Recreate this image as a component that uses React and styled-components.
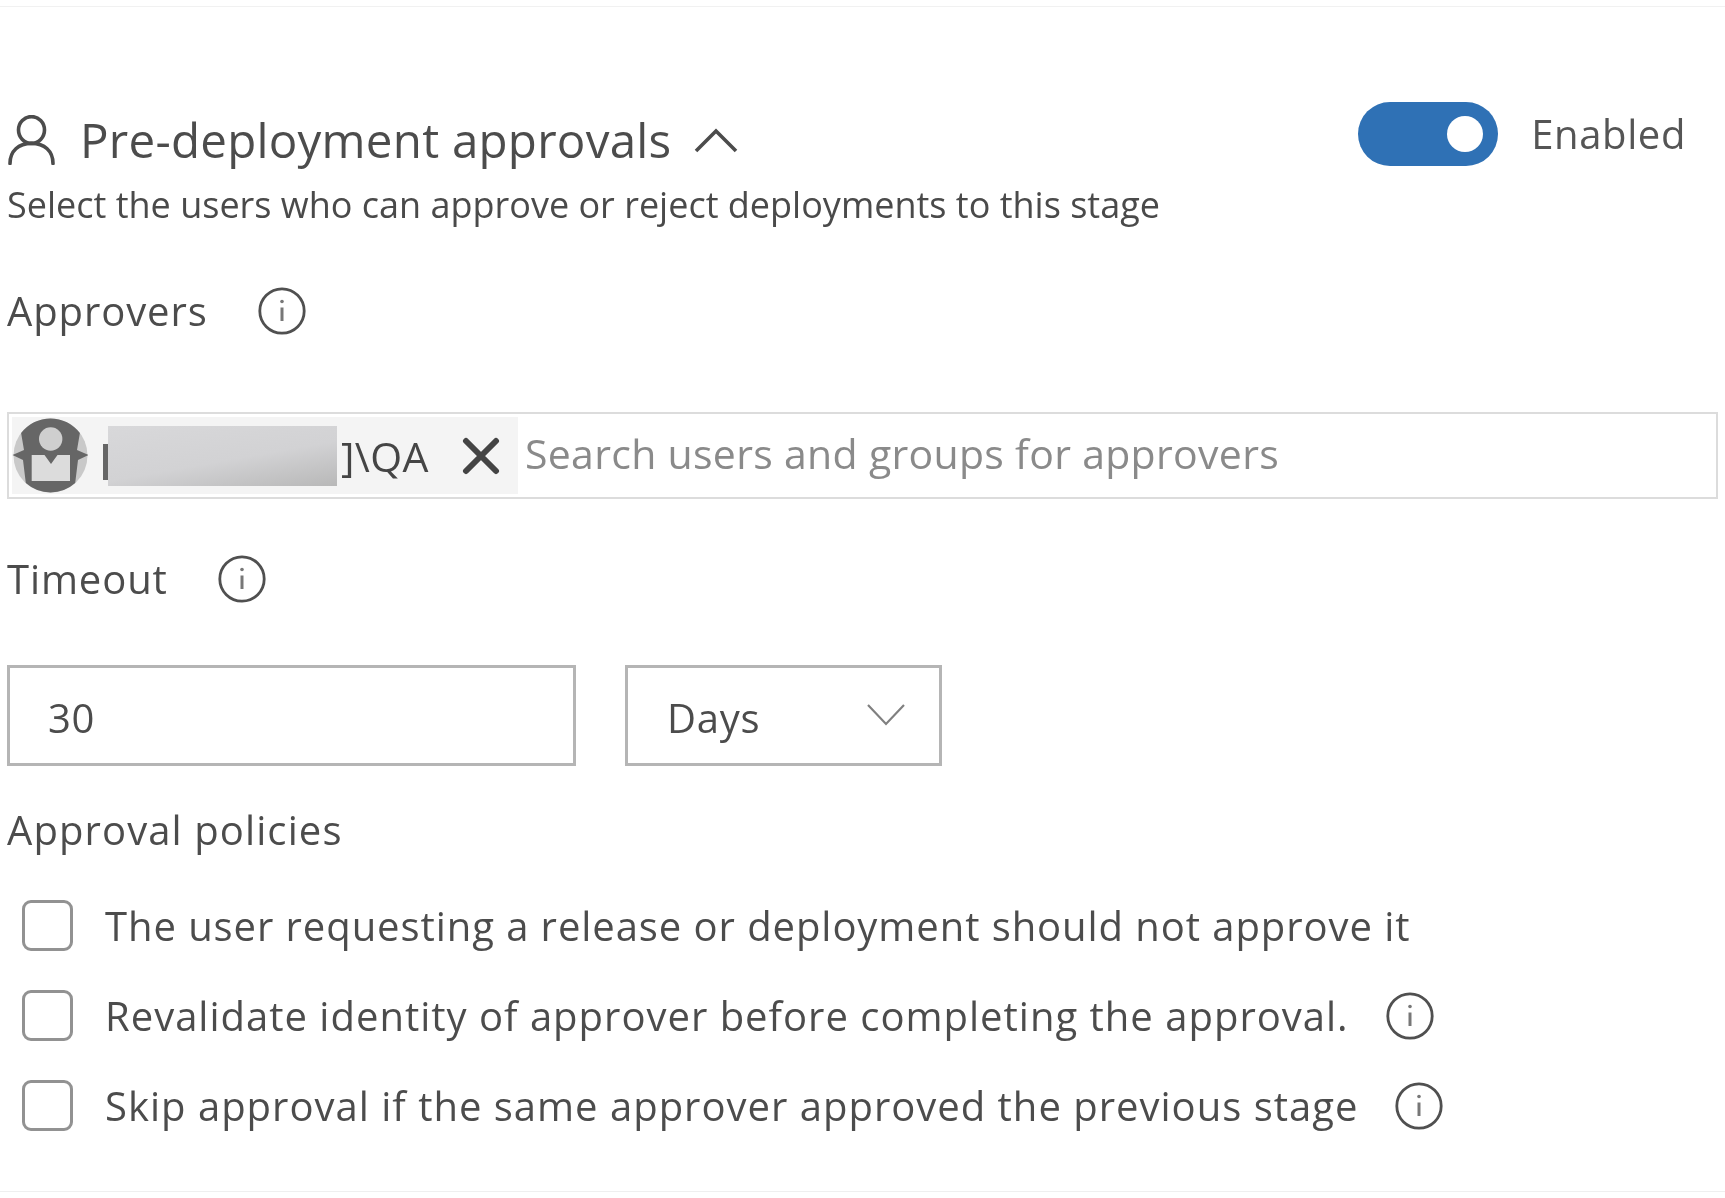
import React from "react";
import styled, { createGlobalStyle } from "styled-components";

const Global = createGlobalStyle`
  html, body { margin: 0; padding: 0; background: #fff; }
  body { font-family: "Open Sans", "Noto Sans", "Liberation Sans", sans-serif; color: #4f4f4f; }
`;

const Panel = styled.main`
  box-sizing: border-box;
  width: 1725px;
  height: 1186px;
  margin-top: 6px;
  padding: 95px 7px 0;
  border-top: 1px solid #f1f1f1;
  border-bottom: 1px solid #efefef;
  filter: blur(0.45px);
`;

const Header = styled.header`
  display: flex;
  justify-content: space-between;
  align-items: flex-start;
  height: 81px;
  padding-right: 32px;
`;

const TitleGroup = styled.div`
  display: flex;
  align-items: center;
  height: 76px;
  padding-left: 1px;
`;

const Title = styled.h1`
  margin: 0 0 0 25px;
  font-size: 47.5px;
  line-height: 76px;
  font-weight: 400;
  letter-spacing: 0.25px;
  color: #4c4c4c;
  white-space: nowrap;
`;

const ToggleGroup = styled.div`
  display: flex;
  align-items: center;
  gap: 33px;
`;

const ToggleTrack = styled.div`
  box-sizing: border-box;
  display: flex;
  align-items: center;
  justify-content: flex-end;
  width: 140px;
  height: 64px;
  padding-right: 15px;
  border-radius: 32px;
  background: #2f71b5;
`;

const ToggleKnob = styled.span`
  width: 36px;
  height: 36px;
  border-radius: 50%;
  background: #fff;
`;

const ToggleLabel = styled.span`
  padding-bottom: 2px;
  font-size: 40px;
  letter-spacing: 0.6px;
  color: #555;
`;

const Subtitle = styled.p`
  margin: 0;
  font-size: 36px;
  line-height: 44px;
  color: #4a4a4a;
  white-space: nowrap;
`;

const LabelRow = styled.div`
  display: flex;
  align-items: center;
  gap: ${(p) => p.$gap}px;
  height: 48px;
  margin-top: ${(p) => p.$top}px;
`;

const Label = styled.span`
  font-size: 40px;
  line-height: 48px;
  letter-spacing: ${(p) => p.$track}px;
  color: #4c4c4c;
  white-space: nowrap;
`;

const Picker = styled.div`
  box-sizing: border-box;
  display: flex;
  align-items: center;
  height: 87px;
  margin-top: 77px;
  padding: 3px;
  border: 2px solid #dcdcdc;
`;

const Chip = styled.div`
  display: flex;
  align-items: center;
  width: 506px;
  height: 100%;
  background: #f4f4f4;
`;

const RedactStart = styled.span`
  width: 5px;
  height: 36px;
  margin: 12px 0 0 15px;
  background: #666;
`;

const Redacted = styled.span`
  width: 229px;
  height: 60px;
  background: linear-gradient(170deg, #d8d8da 0%, #d2d2d4 55%, #b8b8b8 100%);
`;

const ChipName = styled.span`
  width: 121px;
  margin-left: 4px;
  font-size: 41px;
  letter-spacing: 0.4px;
  color: #454545;
  white-space: nowrap;
`;

const SearchText = styled.span`
  margin-left: 7px;
  padding-bottom: 5px;
  font-size: 41px;
  letter-spacing: 0.3px;
  color: #8a8a8a;
  white-space: nowrap;
`;

const FieldRow = styled.div`
  display: flex;
  gap: 49px;
  margin-top: 62px;
`;

const Field = styled.div`
  box-sizing: border-box;
  display: flex;
  align-items: center;
  justify-content: space-between;
  width: ${(p) => p.$width}px;
  height: 101px;
  padding: 4px ${(p) => p.$right}px 0 ${(p) => p.$left}px;
  border: 3px solid #b5b5b5;
  font-size: 40px;
  letter-spacing: 0.7px;
  color: #4c4c4c;
`;

const Policies = styled.div`
  display: flex;
  flex-direction: column;
  gap: 39px;
  margin-top: 46px;
  padding-left: 15px;
`;

const PolicyRow = styled.label`
  display: flex;
  align-items: center;
  height: 51px;
`;

const CheckBox = styled.span`
  box-sizing: border-box;
  flex: none;
  width: 51px;
  height: 51px;
  border: 3px solid #929292;
  border-radius: 9px;
`;

const PolicyText = styled.span`
  margin: 0 ${(p) => p.$gap}px 0 32px;
  font-size: 40px;
  letter-spacing: ${(p) => p.$track}px;
  color: #4c4c4c;
  white-space: nowrap;
`;

const Info = () => (
  <svg width="48" height="48" viewBox="0 0 48 48" fill="none" stroke="#505050" aria-hidden="true">
    <circle cx="24" cy="24" r="22.2" strokeWidth="2.8" />
    <path d="M24 20.5V34" strokeWidth="3" stroke="#777" />
    <circle cx="24" cy="14.5" r="1.8" fill="#777" stroke="none" />
  </svg>
);

const PersonIcon = () => (
  <svg width="47" height="50" viewBox="0 0 47 50" fill="none" stroke="#4c4c4c" strokeWidth="3.6" aria-hidden="true">
    <ellipse cx="23.5" cy="15" rx="13" ry="13.4" />
    <path d="M2 48.5C2 36 10.5 28.4 23.5 28.4S45 36 45 48.5" strokeLinecap="round" />
  </svg>
);

const ChevronUp = () => (
  <svg width="44" height="26" viewBox="0 0 44 26" fill="none" stroke="#4c4c4c" strokeWidth="3.6" style={{ marginLeft: 23 }} aria-hidden="true">
    <path d="M2 24L22 4L42 24" />
  </svg>
);

const DownMark = styled.svg`
  margin-bottom: 6px;
`;

const ChevronDown = () => (
  <DownMark width="40" height="24" viewBox="0 0 40 24" fill="none" stroke="#808080" strokeWidth="2.2" aria-hidden="true">
    <path d="M2 2L20 21L38 2" />
  </DownMark>
);

const CloseIcon = () => (
  <svg width="38" height="38" viewBox="0 0 38 38" fill="none" stroke="#444" strokeWidth="6" strokeLinecap="round" aria-hidden="true">
    <path d="M4 4L34 34M34 4L4 34" />
  </svg>
);

const Avatar = () => (
  <svg width="76" height="77" viewBox="0 0 76 77" aria-hidden="true">
    <circle cx="38.5" cy="38.5" r="37" fill="#c9c9c9" />
    <path d="M9.1 16A37 37 0 0 1 67.9 16L65 33L76.5 38L66 43L63.2 66A37 37 0 0 1 13.8 66L11 43L0.5 38L12 33Z" fill="#666" />
    <circle cx="38.7" cy="22" r="11.7" fill="#cfcfcf" />
    <path d="M19.7 38H32.5L39 47L45.5 38H58V64H19.7Z" fill="#dcdcdc" />
  </svg>
);

export default function App() {
  return (
    <>
      <Global />
      <Panel>
        <Header>
          <TitleGroup>
            <PersonIcon />
            <Title>Pre-deployment approvals</Title>
            <ChevronUp />
          </TitleGroup>
          <ToggleGroup>
            <ToggleTrack><ToggleKnob /></ToggleTrack>
            <ToggleLabel>Enabled</ToggleLabel>
          </ToggleGroup>
        </Header>
        <Subtitle>Select the users who can approve or reject deployments to this stage</Subtitle>
        <LabelRow $gap={50} $top={60}>
          <Label $track={0.9}>Approvers</Label>
          <Info />
        </LabelRow>
        <Picker>
          <Chip>
            <Avatar />
            <RedactStart />
            <Redacted />
            <ChipName>]\QA</ChipName>
            <CloseIcon />
          </Chip>
          <SearchText>Search users and groups for approvers</SearchText>
        </Picker>
        <LabelRow $gap={50} $top={56}>
          <Label $track={0.9}>Timeout</Label>
          <Info />
        </LabelRow>
        <FieldRow>
          <Field $width={569} $left={38} $right={20}>30</Field>
          <Field $width={317} $left={39} $right={33}>Days<ChevronDown /></Field>
        </FieldRow>
        <LabelRow $gap={0} $top={40}>
          <Label $track={1.1}>Approval policies</Label>
        </LabelRow>
        <Policies>
          <PolicyRow>
            <CheckBox />
            <PolicyText $gap={0} $track={0.93}>The user requesting a release or deployment should not approve it</PolicyText>
          </PolicyRow>
          <PolicyRow>
            <CheckBox />
            <PolicyText $gap={37} $track={1}>Revalidate identity of approver before completing the approval.</PolicyText>
            <Info />
          </PolicyRow>
          <PolicyRow>
            <CheckBox />
            <PolicyText $gap={37} $track={1}>Skip approval if the same approver approved the previous stage</PolicyText>
            <Info />
          </PolicyRow>
        </Policies>
      </Panel>
    </>
  );
}
